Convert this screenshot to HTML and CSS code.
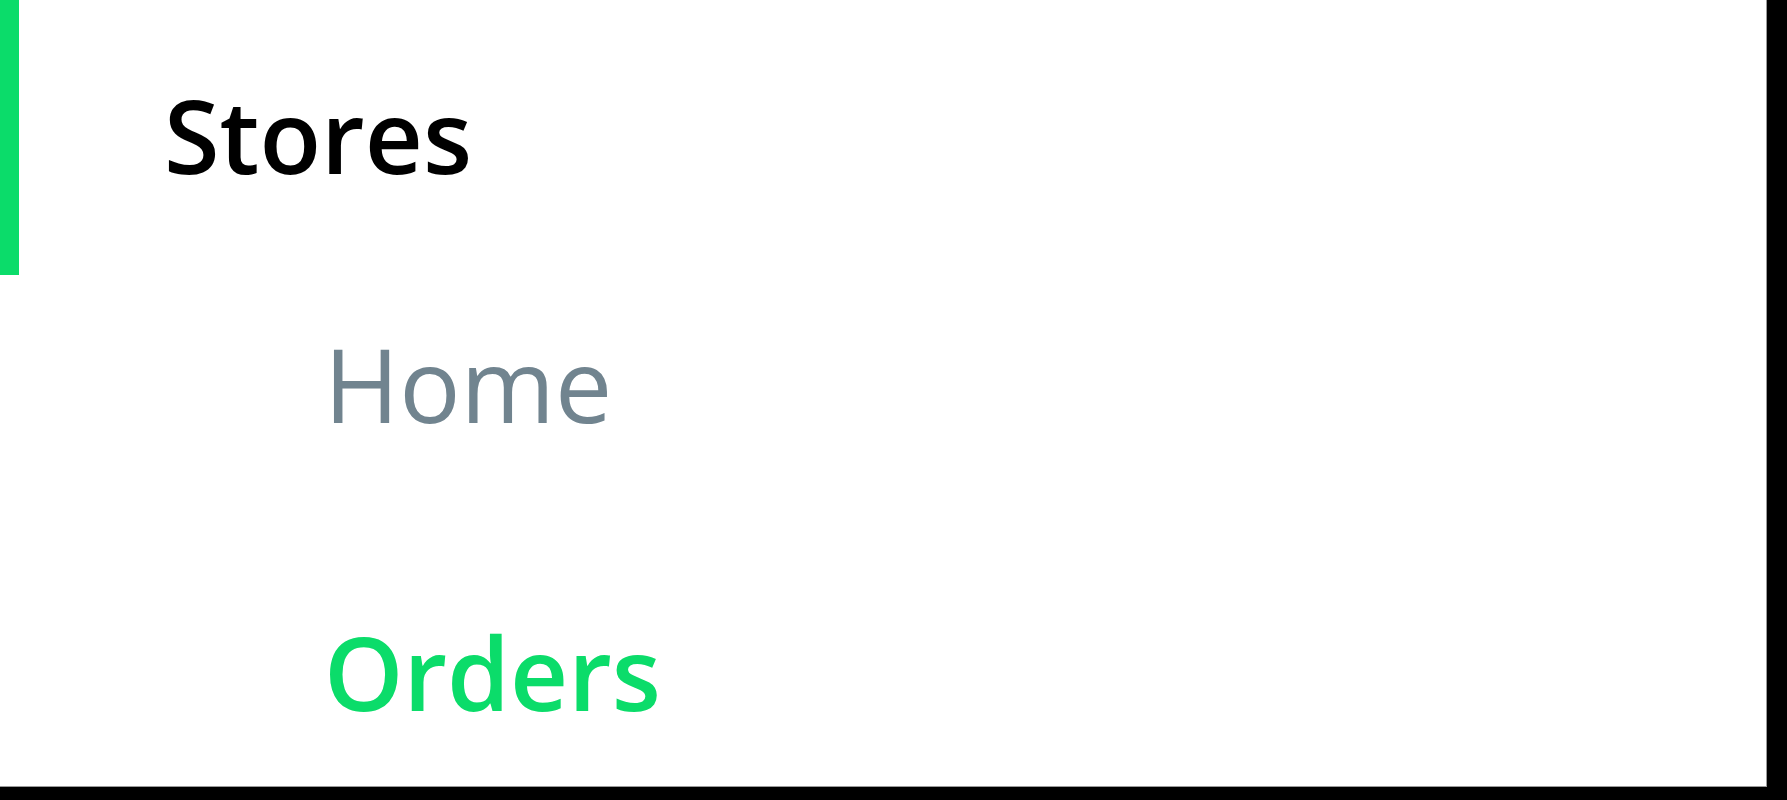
FILE: index.html
```html
<!DOCTYPE html>
<html>
<head>
    <title>Stores</title>
    <link rel="stylesheet" href="styles.css">
</head>
<body>
    <div class="sidebar">
        <div class="section-title">Stores</div>
        <ul class="section-links">
            <li><a href="#">Home</a></li>
            <li><a href="#" class="active">Orders</a></li>
        </ul>
    </div>
</body>
</html>
```

FILE: styles.css
```css
body {
    margin: 0;
    background-color: #000;
    font-family: "Open Sans", "Noto Sans", sans-serif;
}

.sidebar {
    width: 1766px;
    height: 786px;
    background-color: #fff;
    border-right: 1px solid #9a9a9a;
    border-bottom: 1px solid #9a9a9a;
}

.section-title {
    height: 275px;
    box-sizing: border-box;
    padding-bottom: 6px;
    display: flex;
    align-items: center;
    border-left: 19px solid #0bdc6a;
    padding-left: 145px;
    font-size: 101px;
    font-weight: 600;
    line-height: 100px;
    color: #000;
}

.section-links {
    list-style: none;
    margin: 0;
    padding: 59px 0 0 324px;
}

.section-links li {
    font-size: 102px;
    line-height: 100px;
    margin-bottom: 188px;
}

.section-links a {
    color: #71848f;
    text-decoration: none;
}

.section-links a.active {
    color: #0bdc6a;
    font-weight: 600;
    font-size: 101px;
}
```
